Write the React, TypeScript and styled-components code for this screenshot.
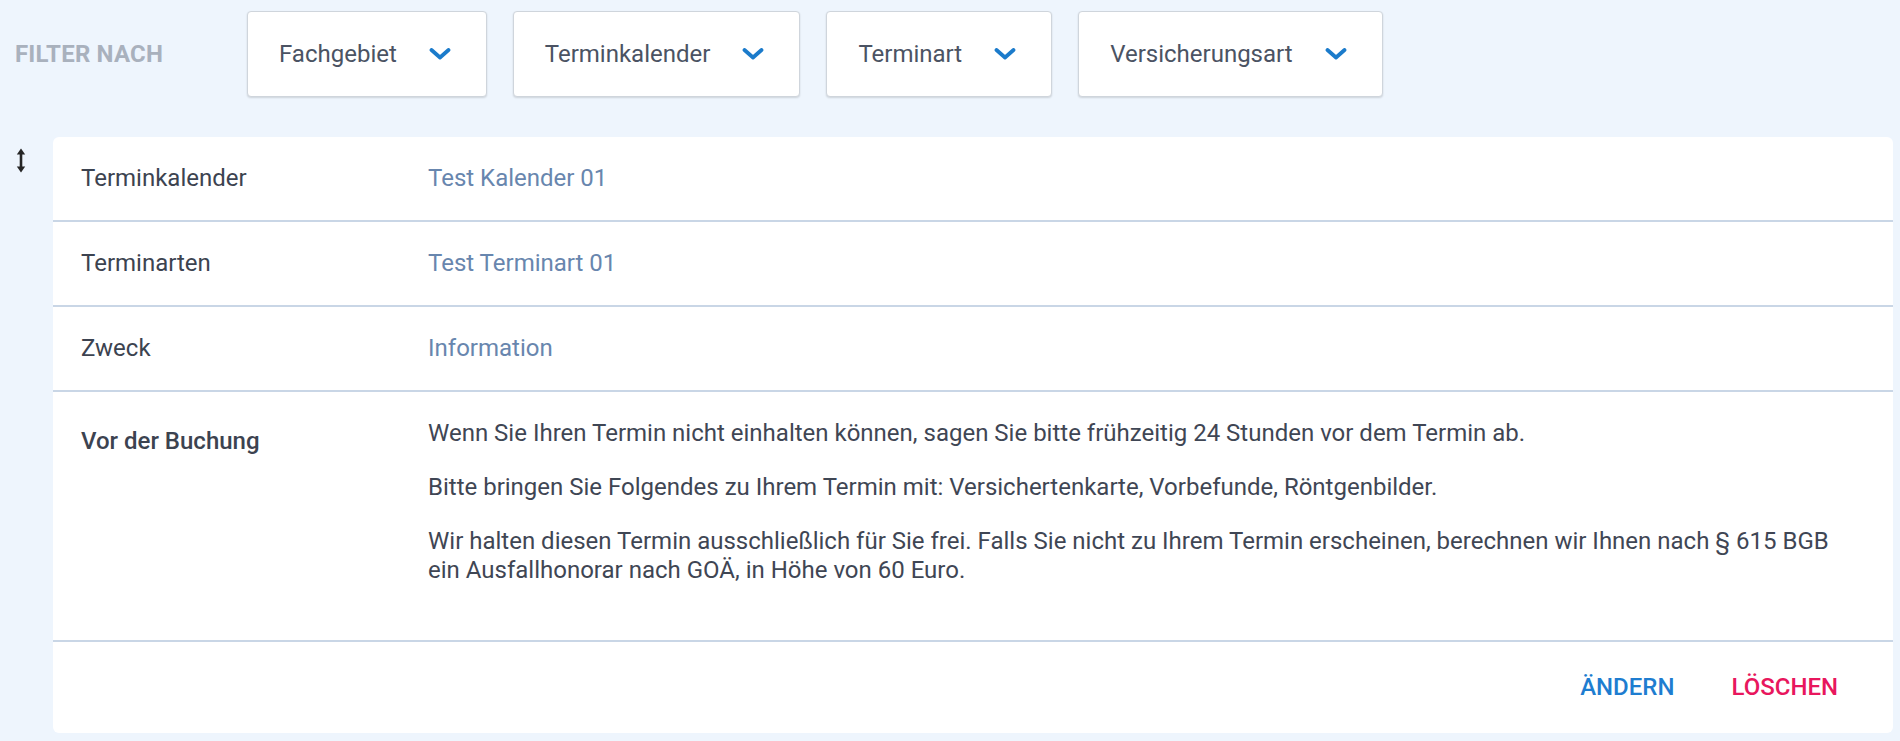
import React from "react";
import styled, { createGlobalStyle } from "styled-components";

const GlobalStyle = createGlobalStyle`
  *, *::before, *::after { box-sizing: border-box; }
  html, body { margin: 0; padding: 0; }
  body {
    background: #eef5fd;
    font-family: Roboto, "Liberation Sans", Arial, sans-serif;
    -webkit-font-smoothing: antialiased;
  }
`;

const Page = styled.div`
  min-height: 741px;
  padding: 11px 7px 8px 15px;
  display: flex;
  flex-direction: column;
`;

const FilterBar = styled.div`
  display: flex;
  align-items: center;
  height: 86px;
`;

const FilterLabel = styled.div`
  width: 232px;
  font-size: 24px;
  font-weight: 700;
  color: #a9b1bd;
  text-transform: uppercase;
  letter-spacing: 0.2px;
`;

const Dropdowns = styled.div`
  display: flex;
  gap: 26px;
  height: 100%;
`;

const Dropdown = styled.button`
  display: flex;
  align-items: center;
  gap: 32px;
  height: 86px;
  padding: 0 35px 0 31px;
  background: #ffffff;
  border: 1px solid #cfd5dc;
  border-radius: 4px;
  box-shadow: 0 1px 2px rgba(0, 0, 0, 0.14);
  font-family: inherit;
  font-size: 24px;
  font-weight: 400;
  color: #4b5363;
  cursor: pointer;
`;

const Main = styled.div`
  display: flex;
  margin-top: 40px;
  flex: 1;
`;

const HandleCol = styled.div`
  width: 38px;
  padding: 11px 0 0 1px;
  flex-shrink: 0;
`;

const Card = styled.div`
  flex: 1;
  background: #ffffff;
  border-radius: 6px;
  display: flex;
  flex-direction: column;
  overflow: hidden;
`;

const Row = styled.div<{ $tall?: boolean }>`
  display: grid;
  grid-template-columns: 347px 1fr;
  padding: ${(p) => (p.$tall ? "27px 28px 30px 28px" : "27px 28px")};
  border-bottom: 2px solid #c9d6e6;
  font-size: 24px;
  line-height: 29px;
`;

const Label = styled.div<{ $strong?: boolean; $offset?: number }>`
  color: #3c4350;
  font-weight: ${(p) => (p.$strong ? 500 : 400)};
  padding-top: ${(p) => p.$offset ?? 0}px;
`;

const Value = styled.div`
  color: #6886ae;
`;

const Text = styled.div`
  color: #3f4654;
`;

const Para = styled.p`
  margin: 0 0 25px 0;
`;

const Footer = styled.div`
  height: 90px;
  display: flex;
  align-items: center;
  justify-content: flex-end;
  gap: 3px;
  padding-right: 28px;
`;

const ActionButton = styled.button<{ $danger?: boolean }>`
  background: none;
  border: none;
  padding: 0 27px;
  font-family: inherit;
  font-size: 24px;
  line-height: 29px;
  font-weight: 500;
  text-transform: uppercase;
  color: ${(p) => (p.$danger ? "#e8175d" : "#1e7dd0")};
  cursor: pointer;
`;

const Chevron = () => (
  <svg width="22" height="12" viewBox="0 0 22 12" aria-hidden>
    <polyline
      points="2.5,2 11,9.5 19.5,2"
      fill="none"
      stroke="#1b7bcb"
      strokeWidth="3.8"
      strokeLinecap="round"
      strokeLinejoin="round"
    />
  </svg>
);

const HandleIcon = () => (
  <svg width="10" height="25" viewBox="0 0 10 25" aria-hidden>
    <line x1="5" y1="4" x2="5" y2="21" stroke="#262626" strokeWidth="2.6" />
    <polygon points="0.8,6.5 5,0.5 9.2,6.5" fill="#262626" />
    <polygon points="0.8,18.5 5,24.5 9.2,18.5" fill="#262626" />
  </svg>
);

const filters = ["Fachgebiet", "Terminkalender", "Terminart", "Versicherungsart"];

const details = [
  { label: "Terminkalender", value: "Test Kalender 01" },
  { label: "Terminarten", value: "Test Terminart 01" },
  { label: "Zweck", value: "Information" },
];

export default function App() {
  return (
    <>
      <GlobalStyle />
      <Page>
        <FilterBar>
          <FilterLabel>Filter nach</FilterLabel>
          <Dropdowns>
            {filters.map((f) => (
              <Dropdown key={f}>
                <span>{f}</span>
                <Chevron />
              </Dropdown>
            ))}
          </Dropdowns>
        </FilterBar>
        <Main>
          <HandleCol>
            <HandleIcon />
          </HandleCol>
          <Card>
            {details.map((d) => (
              <Row key={d.label}>
                <Label>{d.label}</Label>
                <Value>{d.value}</Value>
              </Row>
            ))}
            <Row $tall>
              <Label $strong $offset={8}>
                Vor der Buchung
              </Label>
              <Text>
                <Para>
                  Wenn Sie Ihren Termin nicht einhalten können, sagen Sie bitte frühzeitig 24 Stunden vor dem Termin ab.
                </Para>
                <Para>
                  Bitte bringen Sie Folgendes zu Ihrem Termin mit: Versichertenkarte, Vorbefunde, Röntgenbilder.
                </Para>
                <Para>
                  Wir halten diesen Termin ausschließlich für Sie frei. Falls Sie nicht zu Ihrem Termin erscheinen, berechnen wir Ihnen nach § 615 BGB ein Ausfallhonorar nach GOÄ, in Höhe von 60 Euro.
                </Para>
              </Text>
            </Row>
            <Footer>
              <ActionButton>Ändern</ActionButton>
              <ActionButton $danger>Löschen</ActionButton>
            </Footer>
          </Card>
        </Main>
      </Page>
    </>
  );
}
